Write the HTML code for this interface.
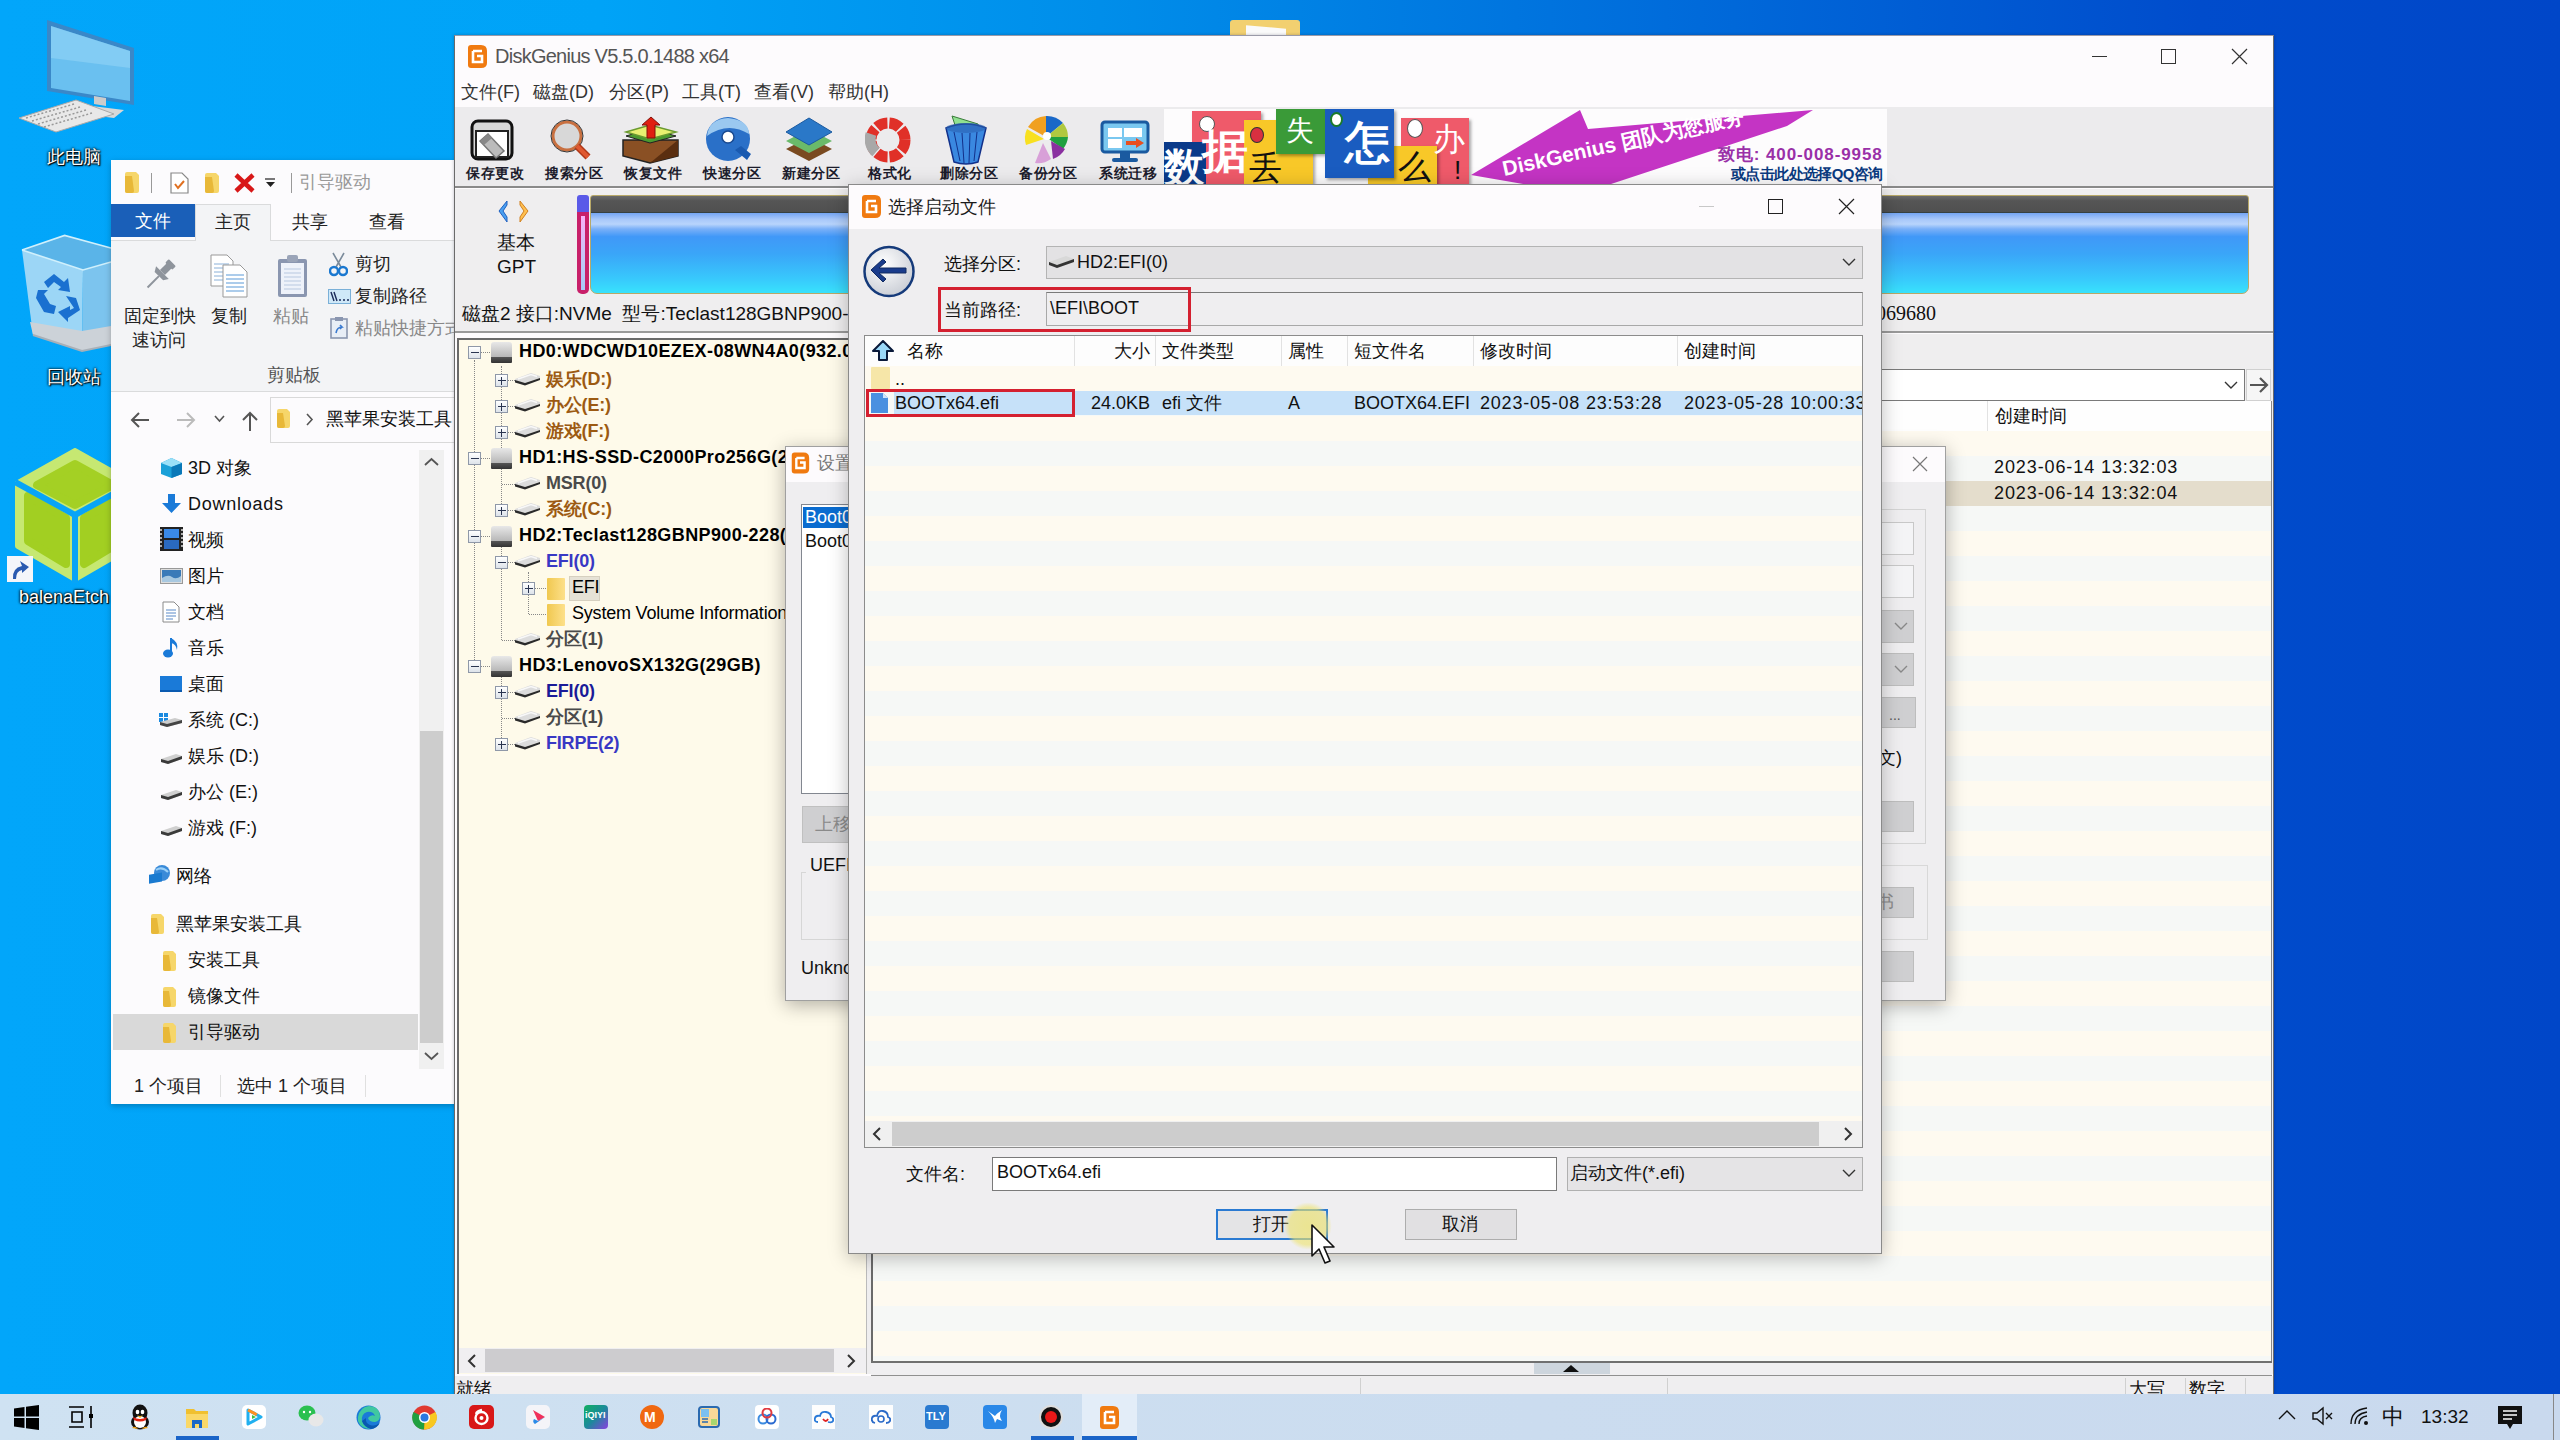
<!DOCTYPE html>
<html><head><meta charset="utf-8">
<style>
*{box-sizing:border-box;margin:0;padding:0}
html,body{width:2560px;height:1440px;overflow:hidden}
body{position:relative;font-family:"Liberation Sans",sans-serif;color:#000;
background:linear-gradient(90deg,#02a6fa 0px,#00a3f7 600px,#008eea 1100px,#006ada 1700px,#004ccc 2200px,#0046c8 2560px);}
.a{position:absolute}
.t{position:absolute;white-space:nowrap;line-height:1}
/* windows */
#exp{left:111px;top:160px;width:350px;height:944px;background:#fff;box-shadow:0 0 12px rgba(0,0,0,.35)}
#dg{left:454px;top:35px;width:1820px;height:1405px;background:#fff;box-shadow:0 0 14px rgba(0,0,0,.35)}
#set{left:785px;top:446px;width:1160px;height:554px;background:#efeef0;border:1px solid #aaa;box-shadow:0 0 16px rgba(0,0,0,.3)}
#dlg{left:848px;top:184px;width:1033px;height:1069px;background:#efeef0;border:1px solid #9a9a9a;box-shadow:0 4px 18px rgba(0,0,0,.35)}
.tbl{top:166px;font-size:14px;font-weight:bold;color:#1c1c2c;letter-spacing:0.5px}
.trt{font-size:18px;letter-spacing:-0.2px}
.xb{width:13px;height:13px;border:1px solid #8f98a8;background:linear-gradient(180deg,#fff,#dde3ea)}
.hdi{width:21px;height:21px;border-radius:3px 3px 1px 1px;background:linear-gradient(180deg,#e8e8e8,#b8b8b8 70%,#555 72%,#333 100%)}
.dri{width:26px;height:13px;background:linear-gradient(165deg,transparent 0 30%,#d8d8d8 31%,#f0f0f0 55%,#c8c8c8 65%,#333 66%,#222 100%);clip-path:polygon(0 60%,75% 0,100% 25%,100% 50%,25% 100%,0 90%)}
.fol{width:18px;height:22px;background:linear-gradient(90deg,#f0c850,#fde08a);border-radius:1px}
.lh{top:342px;font-size:18px;color:#111}
.lr{top:394px;font-size:18px;color:#111}
.dl{font-size:18px;color:#fff;text-shadow:1px 1px 1px #000,0 0 3px #000,0 0 2px #000}
#tb{left:0;top:1394px;width:2560px;height:46px;background:#cfe0f0}
</style></head><body>

<!-- desktop icons -->
<div class="a" style="left:1230px;top:20px;width:70px;height:20px;background:#f2d070;border-radius:3px 3px 0 0"></div>
<div class="a" style="left:1246px;top:27px;width:40px;height:12px;background:#fafafa;transform:skewY(5deg)"></div>
<svg class="a" style="left:14px;top:18px" width="124" height="116" viewBox="0 0 124 116"><path d="M33 2 L120 30 L120 87 L33 73Z" fill="#3a88c8"/><path d="M37 8 L116 33 L116 83 L37 70Z" fill="#6ac0f0"/><path d="M37 8 L116 33 L116 50 L37 40Z" fill="#9ad8f8" opacity=".5"/><path d="M80 78 L92 80 L92 88 L80 86Z" fill="#ccc"/><path d="M70 87 L110 92 L100 100 L60 95Z" fill="#d8d8d8"/><path d="M5 100 L62 82 L100 96 L42 114Z" fill="#e8e8e8" stroke="#aaa" stroke-width="1"/><path d="M12 100 L60 86 M18 103 L66 89 M24 106 L72 92 M30 109 L78 95" stroke="#999" stroke-width="1.5" stroke-dasharray="2 2"/></svg>
<div class="t dl" style="left:47px;top:148px">此电脑</div>
<svg class="a" style="left:18px;top:232px" width="93" height="122" viewBox="0 0 93 122"><path d="M4 18 L46.6 3.4 L93 16 L93 30 L65 38Z" fill="#5ab4e8"/><path d="M4 18 L65 38 L64 119 L15 103Z" fill="#9cd6f6"/><path d="M65 38 L93 30 L93 113 L64 119Z" fill="#7cc4ee"/><path d="M12 90 L64 99 L93 94 L93 113 L64 119 L15 103Z" fill="#ccd2d8"/><path d="M15 103 L64 119 L93 113" stroke="#a8b0b8" stroke-width="2" fill="none"/><path d="M4 18 L46.6 3.4 L93 16 M4 18 L65 38 L93 30" stroke="#d0f0fc" stroke-width="1.6" fill="none"/><path d="M26 50 L36 42 L46 50 L50 46 L52 60 L40 58 L43 55 L36 50 L30 56Z M48 64 L58 66 L62 78 L50 86 L50 90 L40 80 L52 74 L52 78 L56 76Z M20 58 L30 58 L26 62 L32 72 L38 74 L36 82 L26 80 L18 66Z" fill="#1a70d0"/></svg>
<div class="t dl" style="left:47px;top:368px">回收站</div>
<svg class="a" style="left:15px;top:448px" width="120" height="135" viewBox="0 0 120 135"><path d="M60 3 L117 35 L117 98 L60 131 L3 98 L3 35Z" fill="#c6e872" stroke="#c6e872" stroke-width="6" stroke-linejoin="round"/><path d="M60 16 L98 37 L60 57 L22 37Z" fill="#a4d024" stroke="#a4d024" stroke-width="8" stroke-linejoin="round"/><path d="M13 48 L51 70 L51 116 L13 93Z" fill="#a2cf22" stroke="#a2cf22" stroke-width="8" stroke-linejoin="round"/><path d="M69 70 L107 48 L107 93 L69 116Z" fill="#a2cf22" stroke="#a2cf22" stroke-width="8" stroke-linejoin="round"/><path d="M0 34 L60 67 L120 34 M60 67 V135" stroke="#08a4f6" stroke-width="6" fill="none"/></svg>
<div class="a" style="left:7px;top:556px;width:26px;height:26px;background:#f4f6fa"></div><svg class="a" style="left:9px;top:558px" width="22" height="22"><path d="M4 21 Q3 10 13 8 L11 3 L20 9 L13 15 L13 12 Q7 13 7 21Z" fill="#2a5ab0"/></svg>
<div class="t dl" style="left:19px;top:588px">balenaEtch</div>


<!-- explorer -->
<div class="a" style="left:111px;top:160px;width:360px;height:944px;background:#fcfbfd;box-shadow:0 2px 6px rgba(0,0,0,.25)"></div>
<svg class="a" style="left:124px;top:171px" width="17" height="23"><path d="M1 3 Q1 1 3 1 H12 L15 4 V20 Q15 22 13 22 H3 Q1 22 1 20Z" fill="#f6d66a"/><path d="M1 5 H8 L10 20 Q10 22 8 22 H3 Q1 22 1 20Z" fill="#e8b838"/></svg>
<div class="a" style="left:151px;top:173px;width:1px;height:20px;background:#999"></div>
<svg class="a" style="left:170px;top:172px" width="19" height="22"><path d="M1 1 H12 L18 7 V21 H1Z" fill="#fff" stroke="#888" stroke-width="1.2"/><path d="M5 12 L8 16 L14 9" stroke="#e07020" stroke-width="2" fill="none"/></svg>
<svg class="a" style="left:204px;top:172px" width="16" height="22"><path d="M1 3 Q1 1 3 1 H12 L15 4 V19 Q15 21 13 21 H3 Q1 21 1 19Z" fill="#f6d66a"/><path d="M1 5 H8 L10 19 Q10 21 8 21 H3 Q1 21 1 19Z" fill="#e8b838"/></svg>
<svg class="a" style="left:234px;top:173px" width="21" height="20"><path d="M2 2 L19 18 M19 2 L2 18" stroke="#d81818" stroke-width="4.5"/></svg>
<svg class="a" style="left:265px;top:178px" width="11" height="11"><path d="M0 1 H10" stroke="#222" stroke-width="1.2"/><path d="M1 4 H10 L5.5 9Z" fill="#222"/></svg>
<div class="a" style="left:291px;top:173px;width:1px;height:20px;background:#999"></div>
<div class="t" style="left:299px;top:173px;font-size:18px;color:#999">引导驱动</div>
<div class="a" style="left:111px;top:204px;width:84px;height:33px;background:#1a5fb8"></div>
<div class="t" style="left:135px;top:212px;font-size:18px;color:#fff">文件</div>
<div class="a" style="left:111px;top:240px;width:350px;height:1px;background:#dadbdc"></div>
<div class="a" style="left:195px;top:204px;width:76px;height:37px;background:#f3f4f6;border:1px solid #dadbdc;border-bottom:none"></div>
<div class="t" style="left:215px;top:213px;font-size:18px;color:#222">主页</div>
<div class="t" style="left:292px;top:213px;font-size:18px;color:#222">共享</div>
<div class="t" style="left:369px;top:213px;font-size:18px;color:#222">查看</div>
<div class="a" style="left:111px;top:241px;width:350px;height:151px;background:#f3f4f6;border-bottom:1px solid #dadbdc"></div>
<svg class="a" style="left:142px;top:259px" width="34" height="35" viewBox="0 0 34 35"><g transform="translate(19 15) rotate(45)"><rect x="-5" y="-16" width="10" height="5" rx="1" fill="#8e949c"/><rect x="-3.5" y="-12" width="7" height="10" fill="#8e949c"/><path d="M-9 -2 H9 L6 3 H-6Z" fill="#8e949c"/><rect x="-1" y="3" width="2" height="16" fill="#8e949c"/></g></svg>
<div class="t" style="left:124px;top:307px;font-size:18px;color:#222">固定到快</div>
<div class="t" style="left:132px;top:331px;font-size:18px;color:#222">速访问</div>
<svg class="a" style="left:210px;top:254px" width="40" height="44"><path d="M1 1 H17 L23 7 V32 H1Z" fill="#fff" stroke="#999" stroke-width="1"/><path d="M4 10 H19 M4 14 H19 M4 18 H19 M4 22 H19 M4 26 H19" stroke="#8ab0d8" stroke-width="1"/><path d="M13 11 H30 L37 18 V43 H13Z" fill="#fff" stroke="#999" stroke-width="1"/><path d="M16 21 H34 M16 25 H34 M16 29 H34 M16 33 H34 M16 37 H34" stroke="#5a9ad8" stroke-width="1.2"/></svg>
<div class="t" style="left:211px;top:307px;font-size:18px;color:#222">复制</div>
<svg class="a" style="left:276px;top:254px" width="33" height="44"><rect x="2" y="5" width="29" height="38" rx="2" fill="#8a96b0"/><rect x="5" y="9" width="23" height="31" fill="#eef2fa"/><path d="M8 15 H25 M8 19 H25 M8 23 H25 M8 27 H25 M8 31 H25 M8 35 H25" stroke="#b8c8e0" stroke-width="1"/><rect x="11" y="1" width="11" height="7" rx="2" fill="#9aa4b8"/></svg>
<div class="t" style="left:273px;top:307px;font-size:18px;color:#888">粘贴</div>
<svg class="a" style="left:329px;top:252px" width="19" height="25"><path d="M4 1 L12 15 M15 1 L7 15" stroke="#7a8a9a" stroke-width="1.6"/><circle cx="5" cy="19" r="4" fill="none" stroke="#1a78d0" stroke-width="2.4"/><circle cx="14" cy="19" r="4" fill="none" stroke="#1a78d0" stroke-width="2.4"/></svg>
<div class="t" style="left:355px;top:255px;font-size:18px;color:#222">剪切</div>
<svg class="a" style="left:328px;top:289px" width="23" height="15"><rect x="0.5" y="0.5" width="22" height="14" fill="#cfe8f8" stroke="#7ab0d8"/><path d="M3 3 L6 12 M6 3 L9 12" stroke="#1a2a5a" stroke-width="1.4"/><path d="M11 11 H13 M15 11 H17 M19 11 H21" stroke="#1a2a5a" stroke-width="1.5"/></svg>
<div class="t" style="left:355px;top:287px;font-size:18px;color:#222">复制路径</div>
<svg class="a" style="left:330px;top:316px" width="18" height="23"><rect x="1" y="3" width="16" height="19" fill="#e8eef6" stroke="#8a96b0" stroke-width="1.6"/><rect x="5" y="1" width="8" height="4" fill="#8a96b0"/><path d="M6 17 Q7 11 12 11 L10 9 M12 11 L10 13" stroke="#3a7ad0" stroke-width="1.6" fill="none"/></svg>
<div class="t" style="left:355px;top:319px;font-size:18px;color:#888">粘贴快捷方式</div>
<div class="t" style="left:267px;top:366px;font-size:18px;color:#555">剪贴板</div>
<svg class="a" style="left:129px;top:410px" width="22" height="20"><path d="M20 10 H3 M10 3 L3 10 L10 17" stroke="#555" stroke-width="2" fill="none"/></svg>
<svg class="a" style="left:175px;top:410px" width="22" height="20"><path d="M2 10 H19 M12 3 L19 10 L12 17" stroke="#bbb" stroke-width="2" fill="none"/></svg>
<svg class="a" style="left:214px;top:415px" width="11" height="8"><path d="M1 1 L5.5 6 L10 1" stroke="#555" stroke-width="1.6" fill="none"/></svg>
<svg class="a" style="left:240px;top:410px" width="20" height="22"><path d="M10 21 V3 M3 10 L10 3 L17 10" stroke="#555" stroke-width="2" fill="none"/></svg>
<div class="a" style="left:270px;top:397px;width:200px;height:46px;background:#fcfbfd;border:1px solid #d9d9d9"></div>
<svg class="a" style="left:276px;top:408px" width="15" height="21"><path d="M1 3 Q1 1 3 1 H11 L14 4 V18 Q14 20 12 20 H3 Q1 20 1 18Z" fill="#f6d66a"/><path d="M1 5 H7 L9 18 Q9 20 7 20 H3 Q1 20 1 18Z" fill="#e8b838"/></svg>
<svg class="a" style="left:305px;top:413px" width="9" height="13"><path d="M2 1 L7 6.5 L2 12" stroke="#555" stroke-width="1.6" fill="none"/></svg>
<div class="t" style="left:326px;top:410px;font-size:18px;color:#111">黑苹果安装工具</div>
<!-- nav pane -->
<svg class="a" style="left:160px;top:457px" width="23" height="22"><path d="M11.5 1 L22 6 V17 L11.5 21 L1 17 V6Z" fill="#1aa0d8"/><path d="M1 6 L11.5 10 L22 6 L11.5 1Z" fill="#9ae0f8"/><path d="M11.5 10 V21 L22 17 V6Z" fill="#0a78b8"/></svg>
<div class="t" style="left:188px;top:459px;font-size:18px;color:#111">3D 对象</div>
<svg class="a" style="left:161px;top:493px" width="21" height="21"><path d="M7 1 H14 V10 H20 L10.5 20 L1 10 H7Z" fill="#1a7ad8"/></svg>
<div class="t" style="left:188px;top:495px;font-size:18px;color:#111;letter-spacing:0.75px">Downloads</div>
<svg class="a" style="left:160px;top:527px" width="23" height="24"><rect x="0" y="0" width="23" height="24" fill="#222"/><rect x="4" y="2" width="15" height="9" fill="#3a8ae8"/><rect x="4" y="13" width="15" height="9" fill="#2a6ac0"/><path d="M1 2 V22 M22 2 V22" stroke="#ddd" stroke-width="1.5" stroke-dasharray="2 2"/></svg>
<div class="t" style="left:188px;top:531px;font-size:18px;color:#111">视频</div>
<svg class="a" style="left:160px;top:568px" width="23" height="16"><rect x="0.5" y="0.5" width="22" height="15" fill="#ddd" stroke="#999"/><rect x="2" y="2" width="19" height="12" fill="#3a7ab8"/><path d="M2 10 Q8 6 12 9 T21 8 V14 H2Z" fill="#a8c8e0"/></svg>
<div class="t" style="left:188px;top:567px;font-size:18px;color:#111">图片</div>
<svg class="a" style="left:162px;top:601px" width="18" height="22"><path d="M1 1 H12 L17 6 V21 H1Z" fill="#fff" stroke="#8a8a8a"/><path d="M4 9 H14 M4 12 H14 M4 15 H14 M4 18 H11" stroke="#5a8ac8" stroke-width="1"/></svg>
<div class="t" style="left:188px;top:603px;font-size:18px;color:#111">文档</div>
<svg class="a" style="left:163px;top:636px" width="17" height="23"><path d="M8 2 V17" stroke="#1a7ad8" stroke-width="2"/><ellipse cx="5" cy="17.5" rx="5" ry="4" fill="#1a7ad8"/><path d="M8 2 Q16 6 14 14 Q13 8 8 7Z" fill="#1a7ad8"/></svg>
<div class="t" style="left:188px;top:639px;font-size:18px;color:#111">音乐</div>
<div class="a" style="left:160px;top:676px;width:22px;height:16px;background:#1a7ad8;border-bottom:2px solid #0a5ab0"></div>
<div class="t" style="left:188px;top:675px;font-size:18px;color:#111">桌面</div>
<svg class="a" style="left:158px;top:711px" width="25" height="17"><path d="M1 2 H5 V6 H1Z M6 2 H10 V6 H6Z M1 7 H5 V11 H1Z M6 7 H10 V11 H6Z" fill="#1a8ae0"/><path d="M2 11 L17 7 L24 9 V12 L9 16 L2 14Z" fill="#ccc"/><path d="M2 11 L9 13 L24 9 V12 L9 16 L2 14Z" fill="#444"/></svg>
<div class="t" style="left:188px;top:711px;font-size:18px;color:#111">系统 (C:)</div>
<svg class="a dr2" style="left:160px;top:750px" width="23" height="17"><path d="M1 9 L16 4 L22 6 V9 L8 14 L1 12Z" fill="#d0d0d0"/><path d="M1 9 L8 11 L22 6 V9 L8 14 L1 12Z" fill="#3a3a3a"/></svg>
<div class="t" style="left:188px;top:747px;font-size:18px;color:#111">娱乐 (D:)</div>
<svg class="a" style="left:160px;top:786px" width="23" height="17"><path d="M1 9 L16 4 L22 6 V9 L8 14 L1 12Z" fill="#d0d0d0"/><path d="M1 9 L8 11 L22 6 V9 L8 14 L1 12Z" fill="#3a3a3a"/></svg>
<div class="t" style="left:188px;top:783px;font-size:18px;color:#111">办公 (E:)</div>
<svg class="a" style="left:160px;top:822px" width="23" height="17"><path d="M1 9 L16 4 L22 6 V9 L8 14 L1 12Z" fill="#d0d0d0"/><path d="M1 9 L8 11 L22 6 V9 L8 14 L1 12Z" fill="#3a3a3a"/></svg>
<div class="t" style="left:188px;top:819px;font-size:18px;color:#111">游戏 (F:)</div>
<svg class="a" style="left:148px;top:864px" width="23" height="23"><circle cx="14" cy="9" r="8" fill="#3a8ad8"/><path d="M8 6 Q14 2 20 8" stroke="#9ad0f8" stroke-width="2" fill="none"/><rect x="1" y="11" width="13" height="9" fill="#1a7ad0" transform="skewY(-10)"/></svg>
<div class="t" style="left:176px;top:867px;font-size:18px;color:#111">网络</div>
<svg class="a" style="left:150px;top:913px" width="16" height="22"><path d="M1 3 Q1 1 3 1 H11 L14 4 V19 Q14 21 12 21 H3 Q1 21 1 19Z" fill="#f6d66a"/><path d="M1 5 H7 L9 19 Q9 21 7 21 H3 Q1 21 1 19Z" fill="#e8b838"/></svg>
<div class="t" style="left:176px;top:915px;font-size:18px;color:#111">黑苹果安装工具</div>
<svg class="a" style="left:162px;top:950px" width="16" height="22"><path d="M1 3 Q1 1 3 1 H11 L14 4 V19 Q14 21 12 21 H3 Q1 21 1 19Z" fill="#f6d66a"/><path d="M1 5 H7 L9 19 Q9 21 7 21 H3 Q1 21 1 19Z" fill="#e8b838"/></svg>
<div class="t" style="left:188px;top:951px;font-size:18px;color:#111">安装工具</div>
<svg class="a" style="left:162px;top:986px" width="16" height="22"><path d="M1 3 Q1 1 3 1 H11 L14 4 V19 Q14 21 12 21 H3 Q1 21 1 19Z" fill="#f6d66a"/><path d="M1 5 H7 L9 19 Q9 21 7 21 H3 Q1 21 1 19Z" fill="#e8b838"/></svg>
<div class="t" style="left:188px;top:987px;font-size:18px;color:#111">镜像文件</div>
<div class="a" style="left:113px;top:1014px;width:305px;height:36px;background:#d9d9d9"></div>
<svg class="a" style="left:162px;top:1022px" width="16" height="22"><path d="M1 3 Q1 1 3 1 H11 L14 4 V19 Q14 21 12 21 H3 Q1 21 1 19Z" fill="#f6d66a"/><path d="M1 5 H7 L9 19 Q9 21 7 21 H3 Q1 21 1 19Z" fill="#e8b838"/></svg>
<div class="t" style="left:188px;top:1023px;font-size:18px;color:#111">引导驱动</div>
<div class="a" style="left:419px;top:450px;width:25px;height:619px;background:#f0f0f0"></div>
<div class="a" style="left:420px;top:731px;width:23px;height:312px;background:#cdcdcd"></div>
<svg class="a" style="left:424px;top:457px" width="15" height="10"><path d="M1 8 L7.5 2 L14 8" stroke="#555" stroke-width="1.8" fill="none"/></svg>
<svg class="a" style="left:424px;top:1051px" width="15" height="10"><path d="M1 2 L7.5 8 L14 2" stroke="#555" stroke-width="1.8" fill="none"/></svg>
<div class="t" style="left:134px;top:1077px;font-size:18px;color:#222">1 个项目</div>
<div class="a" style="left:220px;top:1075px;width:1px;height:22px;background:#e0e0e0"></div>
<div class="t" style="left:237px;top:1077px;font-size:18px;color:#222">选中 1 个项目</div>
<div class="a" style="left:365px;top:1075px;width:1px;height:22px;background:#e0e0e0"></div>




<!-- diskgenius -->
<div class="a" style="left:454px;top:35px;width:1820px;height:1405px;background:#fdfbfd;border:1px solid #6a6a6a;border-top-color:#9a9aa8;box-shadow:0 0 3px rgba(0,0,40,.25)"></div>
<!-- title -->
<svg class="a" style="left:465px;top:44px" width="24" height="25" viewBox="0 0 24 25"><path d="M3 4 Q3 1 6 1 L16 1 Q22 1 22 7 L22 19 Q22 24 16 24 L6 24 Q3 24 3 21Z" fill="#f07a10"/><path d="M8 7 H17 M8 7 V18 H17 V12 H12" stroke="#fff" stroke-width="2.6" fill="none"/></svg>
<div class="t" style="left:495px;top:46px;font-size:20px;color:#555;letter-spacing:-0.75px">DiskGenius V5.5.0.1488 x64</div>
<div class="a" style="left:2092px;top:56px;width:15px;height:1px;background:#333"></div>
<div class="a" style="left:2161px;top:49px;width:15px;height:15px;border:1px solid #333"></div>
<svg class="a" style="left:2231px;top:48px" width="17" height="17"><path d="M1 1L16 16M16 1L1 16" stroke="#333" stroke-width="1.2"/></svg>
<!-- menu -->
<div class="t" style="left:461px;top:83px;font-size:18px;color:#333;word-spacing:0">文件(F)</div>
<div class="t" style="left:533px;top:83px;font-size:18px;color:#333">磁盘(D)</div>
<div class="t" style="left:609px;top:83px;font-size:18px;color:#333">分区(P)</div>
<div class="t" style="left:682px;top:83px;font-size:18px;color:#333">工具(T)</div>
<div class="t" style="left:754px;top:83px;font-size:18px;color:#333">查看(V)</div>
<div class="t" style="left:828px;top:83px;font-size:18px;color:#333">帮助(H)</div>
<!-- toolbar -->
<div class="a" style="left:455px;top:107px;width:1818px;height:81px;background:#ecebed;border-bottom:2px solid #8a8a8a"></div>
<div class="tbl t" style="left:466px">保存更改</div>
<div class="tbl t" style="left:545px">搜索分区</div>
<div class="tbl t" style="left:624px">恢复文件</div>
<div class="tbl t" style="left:703px">快速分区</div>
<div class="tbl t" style="left:782px">新建分区</div>
<div class="tbl t" style="left:868px">格式化</div>
<div class="tbl t" style="left:940px">删除分区</div>
<div class="tbl t" style="left:1019px">备份分区</div>
<div class="tbl t" style="left:1099px">系统迁移</div>

<!-- toolbar icons -->
<svg class="a" style="left:470px;top:119px" width="44" height="42" viewBox="0 0 44 42"><rect x="2" y="2" width="40" height="38" rx="6" fill="#d8d8d8" stroke="#111" stroke-width="3"/><rect x="6" y="12" width="32" height="26" fill="#fff" stroke="#222" stroke-width="2"/><path d="M10 22 L18 15 L34 32 L26 39 Z" fill="#bbb" stroke="#777" stroke-width="1.5"/><path d="M10 22 L18 15 L22 19 L14 26Z" fill="#888"/></svg>
<svg class="a" style="left:550px;top:119px" width="42" height="42" viewBox="0 0 42 42"><circle cx="17" cy="17" r="14" fill="#d8d8d8" stroke="#c87040" stroke-width="3"/><circle cx="17" cy="17" r="16" fill="none" stroke="#333" stroke-width="1"/><path d="M27 27 L38 38" stroke="#b03818" stroke-width="7"/><path d="M27 27 L38 38" stroke="#e05830" stroke-width="4"/></svg>
<svg class="a" style="left:620px;top:116px" width="62" height="48" viewBox="0 0 62 48"><path d="M3 24 L58 24 L58 40 L30 47 L3 40Z" fill="#8a5024" stroke="#222" stroke-width="1.5"/><path d="M58 24 L58 40 L30 47 Z" fill="#5a2e10"/><path d="M6 20 L30 13 L56 20 L30 27Z" fill="#4a9a30" stroke="#222" stroke-width="1"/><path d="M6 16 L30 9 L56 16 L30 23Z" fill="#e8f070" stroke="#6a9a30" stroke-width="1.5"/><path d="M27 22 V9 H22 L31 1 L40 9 H35 V22Z" fill="#e02010" stroke="#801008" stroke-width="1"/></svg>
<svg class="a" style="left:705px;top:116px" width="50" height="48" viewBox="0 0 50 48"><circle cx="23" cy="23" r="22" fill="#2a70c8"/><path d="M2 20 Q23 5 44 18 Q44 4 23 2 Q4 3 2 20Z" fill="#9ac8f0"/><circle cx="23" cy="21" r="6" fill="#fff" stroke="#1a4a90" stroke-width="1.5"/><path d="M30 34 L42 44 L46 38 L36 30Z" fill="#1a5ab0"/></svg>
<svg class="a" style="left:784px;top:115px" width="50" height="48" viewBox="0 0 50 48"><path d="M2 34 L25 22 L48 34 L25 46Z" fill="#7a4a20"/><path d="M2 26 L25 14 L48 26 L25 38Z" fill="#6aba6a"/><path d="M2 17 L25 3 L48 17 L25 30Z" fill="#2a78c8" stroke="#1a5aa0" stroke-width="1"/></svg>
<svg class="a" style="left:865px;top:117px" width="48" height="48" viewBox="0 0 48 48"><circle cx="23" cy="23" r="17" fill="none" stroke="#e03028" stroke-width="11" stroke-dasharray="11.5 2"/><path d="M6 17 A17 17 0 0 0 11 35" fill="none" stroke="#a8a8a8" stroke-width="11"/></svg>
<svg class="a" style="left:944px;top:114px" width="46" height="52" viewBox="0 0 46 52"><path d="M12 14 L8 2 L34 10 L36 22 Z" fill="#90e090" stroke="#3a7a3a" stroke-width="1"/><path d="M2 14 Q22 6 42 14 L34 48 Q22 52 10 48Z" fill="#3a88e0" stroke="#12308a" stroke-width="1.5"/><path d="M10 18 L16 47 M18 19 L20 49 M26 19 L25 49 M33 18 L30 47" stroke="#12308a" stroke-width="1"/><ellipse cx="22" cy="14" rx="20" ry="5" fill="#2a60b0" opacity=".6"/></svg>
<svg class="a" style="left:1023px;top:115px" width="48" height="50" viewBox="0 0 48 50"><path d="M23 22 L5 12 A22 22 0 0 1 23 1Z" fill="#f0a020"/><path d="M23 22 L23 1 A22 22 0 0 1 40 8Z" fill="#1a68c8"/><path d="M23 22 L40 8 A22 22 0 0 1 45 22Z" fill="#b0c840"/><path d="M23 22 L45 22 A22 22 0 0 1 40 34Z" fill="#20a040"/><path d="M28 26 L42 34 A22 22 0 0 1 30 44Z" fill="#8a30a0"/><path d="M20 28 L28 44 A22 22 0 0 1 12 48Z" fill="#d8a0d8"/><path d="M21 24 L3 30 A22 22 0 0 1 4 14Z" fill="#f8e020"/><circle cx="24" cy="21" r="4" fill="#fff"/></svg>
<svg class="a" style="left:1100px;top:120px" width="50" height="44" viewBox="0 0 50 44"><rect x="2" y="2" width="46" height="30" rx="3" fill="#7ac8f0" stroke="#1a5aa0" stroke-width="3"/><path d="M8 8 H22 V17 H8Z M24 8 H42 V17 H24Z M8 19 H22 V28 H8Z" fill="#fff"/><path d="M26 21 H36 V18 L44 23 L36 28 V25 H26Z" fill="#e85020"/><rect x="20" y="32" width="10" height="6" fill="#1a5aa0"/><rect x="12" y="38" width="26" height="4" rx="2" fill="#1a5aa0"/></svg>
<!-- banner -->
<div class="a" style="left:1164px;top:109px;width:723px;height:77px;background:#fdfcfd;overflow:hidden">
 <div class="a" style="left:28px;top:2px;width:69px;height:75px;background:#ef5a6a;box-shadow:2px 2px 3px rgba(0,0,0,.35)"></div>
 <div class="a" style="left:80px;top:11px;width:69px;height:66px;background:#f8c828;box-shadow:2px 2px 3px rgba(0,0,0,.35)"></div>
 <div class="a" style="left:112px;top:0;width:49px;height:45px;background:#3a9a38;box-shadow:2px 2px 3px rgba(0,0,0,.35)"></div>
 <div class="a" style="left:237px;top:9px;width:68px;height:68px;background:#ef5a6a;box-shadow:2px 2px 3px rgba(0,0,0,.35)"></div>
 <div class="a" style="left:204px;top:37px;width:69px;height:40px;background:#f8c828;box-shadow:2px 2px 3px rgba(0,0,0,.35)"></div>
 <div class="a" style="left:161px;top:0;width:69px;height:69px;background:#1a5cc0;box-shadow:2px 2px 3px rgba(0,0,0,.35)"></div>
 <div class="a" style="left:0;top:33px;width:42px;height:44px;background:#0a3a8a"></div>
 <div class="a" style="left:35px;top:7px;width:16px;height:16px;border-radius:50%;background:#fff;border:1px solid #555"></div>
 <div class="a" style="left:86px;top:18px;width:14px;height:16px;border-radius:50%;background:#d83040;border:1px solid #333"></div>
 <div class="a" style="left:166px;top:3px;width:13px;height:15px;border-radius:50%;background:#fff;border:2px solid #1a7a2a"></div>
 <div class="a" style="left:243px;top:10px;width:16px;height:19px;border-radius:50%;background:#fff;border:1px solid #555"></div>
 <div class="t" style="left:0px;top:38px;font-size:40px;font-weight:bold;color:#fff">数</div>
 <div class="t" style="left:38px;top:19px;font-size:46px;font-weight:bold;color:#fff">据</div>
 <div class="t" style="left:85px;top:42px;font-size:33px;color:#111">丢</div>
 <div class="t" style="left:122px;top:8px;font-size:28px;color:#fff">失</div>
 <div class="t" style="left:181px;top:11px;font-size:45px;font-weight:bold;color:#fff">怎</div>
 <div class="t" style="left:234px;top:41px;font-size:33px;color:#111">么</div>
 <div class="t" style="left:269px;top:14px;font-size:32px;color:#fff">办</div>
 <div class="t" style="left:290px;top:48px;font-size:26px;color:#111">!</div>
 <svg class="a" style="left:0;top:0" width="723" height="77"><path d="M307 66 L416 1 L424 20 L649 1 L623 17 L441 77 L370 77Z" fill="#c434c4"/></svg>
 <div class="t" style="left:341px;top:49px;font-size:21px;font-weight:bold;color:#fff;transform:rotate(-12.6deg);transform-origin:0 100%">DiskGenius 团队为您服务</div>
 <div class="t" style="left:554px;top:37px;font-size:17px;font-weight:bold;color:#9a30a8;letter-spacing:0.9px">致电: 400-008-9958</div>
 <div class="t" style="left:567px;top:57px;font-size:15px;font-weight:bold;color:#0a3a80;letter-spacing:-0.6px">或点击此处选择QQ咨询</div>
</div>
<!-- disk area -->
<div class="a" style="left:455px;top:189px;width:1818px;height:144px;background:#efeeef;border-bottom:2px solid #9a9a9a"></div>
<svg class="a" style="left:494px;top:199px" width="40" height="25"><path d="M13 2 L5 12 L13 23 L13 18 L9 12 L13 6Z" fill="#4aa0f0" stroke="#2060c0" stroke-width="1"/><path d="M26 2 L34 12 L26 23 L26 18 L30 12 L26 6Z" fill="#ffc050" stroke="#d08020" stroke-width="1"/></svg>
<div class="t" style="left:497px;top:233px;font-size:19px;color:#111">基本</div>
<div class="t" style="left:497px;top:257px;font-size:19px;color:#111">GPT</div>
<div class="a" style="left:577px;top:195px;width:12px;height:99px;border-radius:3px 3px 5px 5px;background:linear-gradient(180deg,#5a5ae8 0,#5a5ae8 17%,#c8206a 17.5%,#c8206a 100%)"></div><div class="a" style="left:581px;top:216px;width:4px;height:74px;background:linear-gradient(180deg,#f8b0f8,#c0c8f8 60%,#a8c8f8)"></div>
<div class="a" style="left:590px;top:195px;width:1659px;height:99px;border:1px solid #b8a868;border-radius:3px 3px 7px 7px;overflow:hidden;background:linear-gradient(180deg,#6a6a6a 0,#555 5%,#505050 16%,#2a3a3a 17.5%,#78a8f4 18%,#a8c8fa 24%,#b8d4fc 29%,#7ab0f8 34%,#4098f8 42%,#3aa6f8 60%,#38c8fc 85%,#38e2fc 100%)"></div>
<div class="t" style="left:462px;top:304px;font-size:19px;color:#111">磁盘2 接口:NVMe&nbsp; 型号:Teclast128GBNP900-228</div>
<div class="t" style="left:1876px;top:303px;font-size:20px;color:#111;font-family:'Liberation Serif',serif">069680</div>
<!-- tree pane -->
<div class="a" style="left:457px;top:338px;width:410px;height:1036px;background:#fefaea;border-left:2px solid #6a6a6a;border-top:2px solid #6a6a6a;border-right:1px solid #bbb"></div>
<!-- tree -->
<div class="a" style="left:459px;top:340px;width:407px;height:1008px;overflow:hidden">
<div class="a" style="left:15px;top:20px;width:1px;height:306px;border-left:1px dotted #888"></div>
<div class="a" style="left:42px;top:26px;width:1px;height:66px;border-left:1px dotted #888"></div>
<div class="a" style="left:42px;top:26px;width:1px;height:144px;border-left:1px dotted #888"></div>
<div class="a" style="left:42px;top:206px;width:1px;height:94px;border-left:1px dotted #888"></div>
<div class="a" style="left:42px;top:336px;width:1px;height:68px;border-left:1px dotted #888"></div>
<div class="a" style="left:69px;top:232px;width:1px;height:42px;border-left:1px dotted #888"></div>
<div class="a" style="left:21px;top:12px;width:10px;height:1px;border-top:1px dotted #888"></div>
<div class="a xb" style="left:9px;top:6px"><div class="a" style="left:2px;top:5px;width:8px;height:1px;background:#2a3550"></div></div>
<div class="a hdi" style="left:32px;top:2px"></div>
<div class="t trt" style="left:60px;top:2px;color:#000;font-weight:bold;letter-spacing:0.4px">HD0:WDCWD10EZEX-08WN4A0(932.0GB)</div>
<div class="a" style="left:48px;top:40px;width:8px;height:1px;border-top:1px dotted #888"></div>
<div class="a xb" style="left:36px;top:34px"><div class="a" style="left:2px;top:5px;width:8px;height:1px;background:#2a3550"></div><div class="a" style="left:5px;top:2px;width:1px;height:8px;background:#2a3550"></div></div>
<svg class="a" style="left:56px;top:33px" width="26" height="13"><path d="M0 6 L16 0 L25 3 L25 5 L10 10 L0 8Z" fill="#dcdcdc"/><path d="M3 6 L16 1.5 L22 3.5" stroke="#f8f8f8" stroke-width="1.5" fill="none"/><path d="M0 7 L10 10 L25 5 L25 7 L10 12.5 L0 9.5Z" fill="#2a2a2a"/></svg>
<div class="t trt" style="left:87px;top:30px;color:#9c5a12;font-weight:bold">娱乐(D:)</div>
<div class="a" style="left:48px;top:66px;width:8px;height:1px;border-top:1px dotted #888"></div>
<div class="a xb" style="left:36px;top:60px"><div class="a" style="left:2px;top:5px;width:8px;height:1px;background:#2a3550"></div><div class="a" style="left:5px;top:2px;width:1px;height:8px;background:#2a3550"></div></div>
<svg class="a" style="left:56px;top:59px" width="26" height="13"><path d="M0 6 L16 0 L25 3 L25 5 L10 10 L0 8Z" fill="#dcdcdc"/><path d="M3 6 L16 1.5 L22 3.5" stroke="#f8f8f8" stroke-width="1.5" fill="none"/><path d="M0 7 L10 10 L25 5 L25 7 L10 12.5 L0 9.5Z" fill="#2a2a2a"/></svg>
<div class="t trt" style="left:87px;top:56px;color:#9c5a12;font-weight:bold">办公(E:)</div>
<div class="a" style="left:48px;top:92px;width:8px;height:1px;border-top:1px dotted #888"></div>
<div class="a xb" style="left:36px;top:86px"><div class="a" style="left:2px;top:5px;width:8px;height:1px;background:#2a3550"></div><div class="a" style="left:5px;top:2px;width:1px;height:8px;background:#2a3550"></div></div>
<svg class="a" style="left:56px;top:85px" width="26" height="13"><path d="M0 6 L16 0 L25 3 L25 5 L10 10 L0 8Z" fill="#dcdcdc"/><path d="M3 6 L16 1.5 L22 3.5" stroke="#f8f8f8" stroke-width="1.5" fill="none"/><path d="M0 7 L10 10 L25 5 L25 7 L10 12.5 L0 9.5Z" fill="#2a2a2a"/></svg>
<div class="t trt" style="left:87px;top:82px;color:#9c5a12;font-weight:bold">游戏(F:)</div>
<div class="a" style="left:21px;top:118px;width:10px;height:1px;border-top:1px dotted #888"></div>
<div class="a xb" style="left:9px;top:112px"><div class="a" style="left:2px;top:5px;width:8px;height:1px;background:#2a3550"></div></div>
<div class="a hdi" style="left:32px;top:108px"></div>
<div class="t trt" style="left:60px;top:108px;color:#000;font-weight:bold;letter-spacing:0.4px">HD1:HS-SSD-C2000Pro256G(238GB)</div>
<div class="a" style="left:43px;top:144px;width:13px;height:1px;border-top:1px dotted #888"></div>
<svg class="a" style="left:56px;top:137px" width="26" height="13"><path d="M0 6 L16 0 L25 3 L25 5 L10 10 L0 8Z" fill="#dcdcdc"/><path d="M3 6 L16 1.5 L22 3.5" stroke="#f8f8f8" stroke-width="1.5" fill="none"/><path d="M0 7 L10 10 L25 5 L25 7 L10 12.5 L0 9.5Z" fill="#2a2a2a"/></svg>
<div class="t trt" style="left:87px;top:134px;color:#4a4a4a;font-weight:bold">MSR(0)</div>
<div class="a" style="left:48px;top:170px;width:8px;height:1px;border-top:1px dotted #888"></div>
<div class="a xb" style="left:36px;top:164px"><div class="a" style="left:2px;top:5px;width:8px;height:1px;background:#2a3550"></div><div class="a" style="left:5px;top:2px;width:1px;height:8px;background:#2a3550"></div></div>
<svg class="a" style="left:56px;top:163px" width="26" height="13"><path d="M0 6 L16 0 L25 3 L25 5 L10 10 L0 8Z" fill="#dcdcdc"/><path d="M3 6 L16 1.5 L22 3.5" stroke="#f8f8f8" stroke-width="1.5" fill="none"/><path d="M0 7 L10 10 L25 5 L25 7 L10 12.5 L0 9.5Z" fill="#2a2a2a"/></svg>
<div class="t trt" style="left:87px;top:160px;color:#9c5a12;font-weight:bold">系统(C:)</div>
<div class="a" style="left:21px;top:196px;width:10px;height:1px;border-top:1px dotted #888"></div>
<div class="a xb" style="left:9px;top:190px"><div class="a" style="left:2px;top:5px;width:8px;height:1px;background:#2a3550"></div></div>
<div class="a hdi" style="left:32px;top:186px"></div>
<div class="t trt" style="left:60px;top:186px;color:#000;font-weight:bold;letter-spacing:0.4px">HD2:Teclast128GBNP900-228(119GB)</div>
<div class="a" style="left:48px;top:222px;width:8px;height:1px;border-top:1px dotted #888"></div>
<div class="a xb" style="left:36px;top:216px"><div class="a" style="left:2px;top:5px;width:8px;height:1px;background:#2a3550"></div></div>
<svg class="a" style="left:56px;top:215px" width="26" height="13"><path d="M0 6 L16 0 L25 3 L25 5 L10 10 L0 8Z" fill="#dcdcdc"/><path d="M3 6 L16 1.5 L22 3.5" stroke="#f8f8f8" stroke-width="1.5" fill="none"/><path d="M0 7 L10 10 L25 5 L25 7 L10 12.5 L0 9.5Z" fill="#2a2a2a"/></svg>
<div class="t trt" style="left:87px;top:212px;color:#3838c4;font-weight:bold">EFI(0)</div>
<div class="a" style="left:75px;top:248px;width:12px;height:1px;border-top:1px dotted #888"></div>
<div class="a xb" style="left:63px;top:242px"><div class="a" style="left:2px;top:5px;width:8px;height:1px;background:#2a3550"></div><div class="a" style="left:5px;top:2px;width:1px;height:8px;background:#2a3550"></div></div>
<div class="a fol" style="left:88px;top:238px"></div>
<div class="a" style="left:110px;top:236px;width:31px;height:25px;background:#e6e2d6;border:1px solid #d6d0c0"></div>
<div class="t trt" style="left:113px;top:238px;color:#000">EFI</div>
<div class="a" style="left:70px;top:274px;width:17px;height:1px;border-top:1px dotted #888"></div>
<div class="a fol" style="left:88px;top:264px"></div>
<div class="t trt" style="left:113px;top:264px;color:#000">System Volume Information</div>
<div class="a" style="left:43px;top:300px;width:13px;height:1px;border-top:1px dotted #888"></div>
<svg class="a" style="left:56px;top:293px" width="26" height="13"><path d="M0 6 L16 0 L25 3 L25 5 L10 10 L0 8Z" fill="#dcdcdc"/><path d="M3 6 L16 1.5 L22 3.5" stroke="#f8f8f8" stroke-width="1.5" fill="none"/><path d="M0 7 L10 10 L25 5 L25 7 L10 12.5 L0 9.5Z" fill="#2a2a2a"/></svg>
<div class="t trt" style="left:87px;top:290px;color:#4a4a4a;font-weight:bold">分区(1)</div>
<div class="a" style="left:21px;top:326px;width:10px;height:1px;border-top:1px dotted #888"></div>
<div class="a xb" style="left:9px;top:320px"><div class="a" style="left:2px;top:5px;width:8px;height:1px;background:#2a3550"></div></div>
<div class="a hdi" style="left:32px;top:316px"></div>
<div class="t trt" style="left:60px;top:316px;color:#000;font-weight:bold;letter-spacing:0.4px">HD3:LenovoSX132G(29GB)</div>
<div class="a" style="left:48px;top:352px;width:8px;height:1px;border-top:1px dotted #888"></div>
<div class="a xb" style="left:36px;top:346px"><div class="a" style="left:2px;top:5px;width:8px;height:1px;background:#2a3550"></div><div class="a" style="left:5px;top:2px;width:1px;height:8px;background:#2a3550"></div></div>
<svg class="a" style="left:56px;top:345px" width="26" height="13"><path d="M0 6 L16 0 L25 3 L25 5 L10 10 L0 8Z" fill="#dcdcdc"/><path d="M3 6 L16 1.5 L22 3.5" stroke="#f8f8f8" stroke-width="1.5" fill="none"/><path d="M0 7 L10 10 L25 5 L25 7 L10 12.5 L0 9.5Z" fill="#2a2a2a"/></svg>
<div class="t trt" style="left:87px;top:342px;color:#1a1a98;font-weight:bold">EFI(0)</div>
<div class="a" style="left:43px;top:378px;width:13px;height:1px;border-top:1px dotted #888"></div>
<svg class="a" style="left:56px;top:371px" width="26" height="13"><path d="M0 6 L16 0 L25 3 L25 5 L10 10 L0 8Z" fill="#dcdcdc"/><path d="M3 6 L16 1.5 L22 3.5" stroke="#f8f8f8" stroke-width="1.5" fill="none"/><path d="M0 7 L10 10 L25 5 L25 7 L10 12.5 L0 9.5Z" fill="#2a2a2a"/></svg>
<div class="t trt" style="left:87px;top:368px;color:#4a4a4a;font-weight:bold">分区(1)</div>
<div class="a" style="left:48px;top:404px;width:8px;height:1px;border-top:1px dotted #888"></div>
<div class="a xb" style="left:36px;top:398px"><div class="a" style="left:2px;top:5px;width:8px;height:1px;background:#2a3550"></div><div class="a" style="left:5px;top:2px;width:1px;height:8px;background:#2a3550"></div></div>
<svg class="a" style="left:56px;top:397px" width="26" height="13"><path d="M0 6 L16 0 L25 3 L25 5 L10 10 L0 8Z" fill="#dcdcdc"/><path d="M3 6 L16 1.5 L22 3.5" stroke="#f8f8f8" stroke-width="1.5" fill="none"/><path d="M0 7 L10 10 L25 5 L25 7 L10 12.5 L0 9.5Z" fill="#2a2a2a"/></svg>
<div class="t trt" style="left:87px;top:394px;color:#3838c4;font-weight:bold">FIRPE(2)</div>
</div>
<div class="a" style="left:459px;top:1348px;width:407px;height:25px;background:#f0eff1"></div>
<div class="a" style="left:485px;top:1349px;width:349px;height:23px;background:#cdcccf"></div>
<svg class="a" style="left:466px;top:1353px" width="12" height="16"><path d="M9 2 L3 8 L9 14" stroke="#333" stroke-width="2" fill="none"/></svg>
<svg class="a" style="left:845px;top:1353px" width="12" height="16"><path d="M3 2 L9 8 L3 14" stroke="#333" stroke-width="2" fill="none"/></svg>
<!-- right pane -->
<div class="a" style="left:867px;top:334px;width:1406px;height:1040px;background:#efeeef"></div>
<div class="a" style="left:871px;top:369px;width:1374px;height:32px;background:#fff;border:1px solid #7a7a7a"></div>
<svg class="a" style="left:2224px;top:380px" width="14" height="10"><path d="M1 2 L7 8 L13 2" stroke="#333" stroke-width="1.4" fill="none"/></svg>
<div class="a" style="left:2246px;top:369px;width:25px;height:32px;background:#f6f6f6;border:1px solid #d0d0d0"></div>
<svg class="a" style="left:2248px;top:375px" width="22" height="20"><path d="M2 10 H19 M12 3 L19 10 L12 17" stroke="#555" stroke-width="2.2" fill="none"/></svg>
<div class="a" style="left:871px;top:401px;width:1401px;height:961px;border-left:2px solid #6a6a6a;border-right:1px solid #888;background:repeating-linear-gradient(180deg,#fefaf0 0,#fefaf0 25px,#f6f8f6 25px,#f6f8f6 50px);background-position:0 30px"></div>
<div class="a" style="left:873px;top:401px;width:1398px;height:30px;background:#fefefe"></div>
<div class="a" style="left:1987px;top:401px;width:1px;height:30px;background:#e2e2e2"></div>
<div class="t" style="left:1995px;top:407px;font-size:18px;color:#111">创建时间</div>
<div class="a" style="left:873px;top:481px;width:1398px;height:25px;background:#e4ddcc"></div>
<div class="t" style="left:1994px;top:458px;font-size:18px;color:#111;letter-spacing:0.9px">2023-06-14 13:32:03</div>
<div class="t" style="left:1994px;top:484px;font-size:18px;color:#111;letter-spacing:0.9px">2023-06-14 13:32:04</div>
<div class="a" style="left:871px;top:1361px;width:1401px;height:15px;background:#f0eff1;border-top:2px solid #707070;border-bottom:1px solid #909090"></div>
<div class="a" style="left:1534px;top:1363px;width:76px;height:11px;background:#cdd5dd"></div>
<svg class="a" style="left:1561px;top:1363px" width="20" height="10"><path d="M2 9 L10 2 L18 9Z" fill="#111"/></svg>
<div class="a" style="left:455px;top:1376px;width:1818px;height:20px;background:#efeef0"></div>
<div class="t" style="left:456px;top:1380px;font-size:18px;color:#111">就绪</div>
<div class="a" style="left:1360px;top:1378px;width:1px;height:18px;background:#d0d0d0"></div>
<div class="a" style="left:1667px;top:1378px;width:1px;height:18px;background:#d0d0d0"></div>
<div class="a" style="left:2125px;top:1378px;width:1px;height:18px;background:#d0d0d0"></div>
<div class="a" style="left:2185px;top:1378px;width:1px;height:18px;background:#d0d0d0"></div>
<div class="a" style="left:2245px;top:1378px;width:1px;height:18px;background:#d0d0d0"></div>
<div class="t" style="left:2129px;top:1380px;font-size:18px;color:#111">大写</div>
<div class="t" style="left:2189px;top:1380px;font-size:18px;color:#111">数字</div>

<!-- settings dialog -->
<div class="a" style="left:785px;top:446px;width:1161px;height:555px;background:#efeef0;border:1px solid #a0a0a0;box-shadow:0 4px 18px rgba(0,0,0,.3)"></div>
<div class="a" style="left:786px;top:447px;width:1159px;height:35px;background:#fdfbfd"></div>
<svg class="a" style="left:789px;top:451px" width="22" height="24" viewBox="0 0 24 25"><path d="M3 4 Q3 1 6 1 L16 1 Q22 1 22 7 L22 19 Q22 24 16 24 L6 24 Q3 24 3 21Z" fill="#f07a10"/><path d="M8 7 H17 M8 7 V18 H17 V12 H12" stroke="#fff" stroke-width="2.6" fill="none"/></svg>
<div class="t" style="left:817px;top:454px;font-size:18px;color:#777">设置</div>
<svg class="a" style="left:1912px;top:456px" width="16" height="16"><path d="M1 1L15 15M15 1L1 15" stroke="#777" stroke-width="1.2"/></svg>
<div class="a" style="left:801px;top:504px;width:80px;height:290px;background:#fff;border:1px solid #828790"></div>
<div class="a" style="left:803px;top:507px;width:60px;height:21px;background:#0a6cd0"></div>
<div class="t" style="left:805px;top:508px;font-size:18px;color:#fff">Boot0</div>
<div class="t" style="left:805px;top:532px;font-size:18px;color:#111">Boot0</div>
<div class="a" style="left:802px;top:806px;width:80px;height:37px;background:#cfcfd1;border:1px solid #c0c0c0"></div>
<div class="t" style="left:815px;top:815px;font-size:18px;color:#8a8a8a">上移</div>
<div class="a" style="left:801px;top:872px;width:80px;height:68px;border:1px solid #d6d6d6"></div>
<div class="a" style="left:806px;top:856px;width:44px;height:20px;background:#efeef0"></div>
<div class="t" style="left:810px;top:856px;font-size:18px;color:#111">UEFI</div>
<div class="t" style="left:801px;top:959px;font-size:18px;color:#111">Unknown</div>
<!-- right side of settings visible -->
<div class="a" style="left:1860px;top:509px;width:66px;height:335px;border:1px solid #d4d4d4;border-left:none"></div>
<div class="a" style="left:1860px;top:522px;width:54px;height:33px;background:#f4f4f6;border:1px solid #c8c8c8"></div>
<div class="a" style="left:1860px;top:565px;width:54px;height:33px;background:#f4f4f6;border:1px solid #c8c8c8"></div>
<div class="a" style="left:1860px;top:610px;width:54px;height:33px;background:#cfcfd1;border:1px solid #bdbdbd"></div>
<svg class="a" style="left:1894px;top:621px" width="14" height="10"><path d="M1 2 L7 8 L13 2" stroke="#888" stroke-width="1.4" fill="none"/></svg>
<div class="a" style="left:1860px;top:653px;width:54px;height:33px;background:#cfcfd1;border:1px solid #bdbdbd"></div>
<svg class="a" style="left:1894px;top:664px" width="14" height="10"><path d="M1 2 L7 8 L13 2" stroke="#888" stroke-width="1.4" fill="none"/></svg>
<div class="a" style="left:1860px;top:697px;width:56px;height:31px;background:#cfcfd1;border:1px solid #bdbdbd"></div>
<div class="t" style="left:1889px;top:708px;font-size:14px;color:#555">...</div>
<div class="t" style="left:1878px;top:749px;font-size:18px;color:#111">文)</div>
<div class="a" style="left:1860px;top:801px;width:54px;height:31px;background:#cfcfd1;border:1px solid #bdbdbd"></div>
<div class="a" style="left:1860px;top:865px;width:68px;height:75px;border:1px solid #d8d8d8;border-left:none"></div>
<div class="a" style="left:1860px;top:887px;width:54px;height:31px;background:#cfcfd1;border:1px solid #bdbdbd"></div>
<div class="t" style="left:1876px;top:893px;font-size:18px;color:#8a8a8a">书</div>
<div class="a" style="left:1860px;top:951px;width:54px;height:31px;background:#cfcfd1;border:1px solid #bdbdbd"></div>



<!-- select boot file dialog -->
<div class="a" style="left:848px;top:184px;width:1034px;height:1070px;background:#efeef0;border:1px solid #8a8a8a;box-shadow:0 4px 18px rgba(0,0,0,.26)"></div>
<div class="a" style="left:849px;top:185px;width:1032px;height:44px;background:#fdfbfd"></div>
<svg class="a" style="left:859px;top:194px" width="24" height="25" viewBox="0 0 24 25"><path d="M3 4 Q3 1 6 1 L16 1 Q22 1 22 7 L22 19 Q22 24 16 24 L6 24 Q3 24 3 21Z" fill="#f07a10"/><path d="M8 7 H17 M8 7 V18 H17 V12 H12" stroke="#fff" stroke-width="2.6" fill="none"/></svg>
<div class="t" style="left:888px;top:198px;font-size:18px;color:#1a1a1a">选择启动文件</div>
<div class="a" style="left:1699px;top:206px;width:15px;height:1px;background:#c8c8c8"></div>
<div class="a" style="left:1768px;top:199px;width:15px;height:15px;border:1px solid #222"></div>
<svg class="a" style="left:1838px;top:198px" width="17" height="17"><path d="M1 1L16 16M16 1L1 16" stroke="#222" stroke-width="1.2"/></svg>
<!-- back btn -->
<svg class="a" style="left:862px;top:244px" width="54" height="55" viewBox="0 0 54 55"><defs><radialGradient id="bg1" cx=".4" cy=".35" r=".7"><stop offset="0" stop-color="#fff"/><stop offset="1" stop-color="#c8ccd4"/></radialGradient></defs><circle cx="27" cy="27.5" r="24.5" fill="url(#bg1)" stroke="#153a7a" stroke-width="2.5"/><path d="M9 26 L21 15 L24 18 L17 24 H44 V29 H17 L24 35 L21 38Z" fill="#1a3c8c" stroke="#102a60" stroke-width="1" stroke-linejoin="round"/></svg>
<div class="t" style="left:944px;top:255px;font-size:18px;color:#111">选择分区:</div>
<div class="a" style="left:1046px;top:246px;width:817px;height:33px;background:#e3e2e4;border:1px solid #b4b4b4"></div>
<svg class="a" style="left:1049px;top:256px" width="26" height="14"><path d="M0 6 L17 0 L25 3 L25 6 L8 12 L0 9Z" fill="#d8d8d8"/><path d="M0 6 L8 9 L25 3 L25 6 L8 12 L0 9Z" fill="#333"/></svg>
<div class="t" style="left:1077px;top:253px;font-size:18px;color:#111">HD2:EFI(0)</div>
<svg class="a" style="left:1842px;top:257px" width="14" height="10"><path d="M1 2 L7 8 L13 2" stroke="#333" stroke-width="1.4" fill="none"/></svg>
<div class="t" style="left:944px;top:301px;font-size:18px;color:#111">当前路径:</div>
<div class="a" style="left:1046px;top:292px;width:817px;height:34px;background:#efeef0;border:1px solid #a8a8a8;border-top-color:#7a7a7a"></div>
<div class="t" style="left:1050px;top:299px;font-size:18px;color:#111">\EFI\BOOT</div>
<div class="a" style="left:938px;top:287px;width:253px;height:45px;border:3px solid #d42030"></div>
<!-- list -->
<div class="a" style="left:864px;top:335px;width:999px;height:813px;border:1px solid #8c8c8c;background:repeating-linear-gradient(180deg,#fefaf0 0,#fefaf0 25px,#f6f8f6 25px,#f6f8f6 50px);background-position:0 30px"></div>
<div class="a" style="left:865px;top:336px;width:997px;height:30px;background:#fdfdfd"></div>
<div class="a" style="left:1074px;top:336px;width:1px;height:30px;background:#e2e2e2"></div>
<div class="a" style="left:1155px;top:336px;width:1px;height:30px;background:#e2e2e2"></div>
<div class="a" style="left:1281px;top:336px;width:1px;height:30px;background:#e2e2e2"></div>
<div class="a" style="left:1347px;top:336px;width:1px;height:30px;background:#e2e2e2"></div>
<div class="a" style="left:1473px;top:336px;width:1px;height:30px;background:#e2e2e2"></div>
<div class="a" style="left:1677px;top:336px;width:1px;height:30px;background:#e2e2e2"></div>
<svg class="a" style="left:872px;top:340px" width="22" height="22" viewBox="0 0 22 22"><path d="M11 1 L21 11 H15 V20 H7 V11 H1Z" fill="#9ad8f8" stroke="#0a1a3a" stroke-width="2" stroke-linejoin="round"/></svg>
<div class="lh t" style="left:907px">名称</div>
<div class="lh t" style="left:1114px">大小</div>
<div class="lh t" style="left:1162px">文件类型</div>
<div class="lh t" style="left:1288px">属性</div>
<div class="lh t" style="left:1354px">短文件名</div>
<div class="lh t" style="left:1480px">修改时间</div>
<div class="lh t" style="left:1684px">创建时间</div>
<div class="a" style="left:871px;top:367px;width:19px;height:22px;background:#f6e6a8;border-radius:1px"></div>
<div class="t" style="left:895px;top:370px;font-size:18px;color:#111">..</div>
<div class="a" style="left:894px;top:391px;width:968px;height:24px;background:#c6e1f9"></div>
<svg class="a" style="left:870px;top:392px" width="20" height="22"><path d="M1 1 H13 L18 6 V21 H1Z" fill="#4a90e0"/><path d="M13 1 L18 6 H13Z" fill="#cfe4fa"/></svg>
<div class="t" style="left:1358px;top:394px;width:0"></div>
<div class="lr t" style="left:895px">BOOTx64.efi</div>
<div class="lr t" style="left:1091px">24.0KB</div>
<div class="lr t" style="left:1162px">efi 文件</div>
<div class="lr t" style="left:1288px">A</div>
<div class="lr t" style="left:1354px">BOOTX64.EFI</div>
<div class="lr t" style="left:1480px;letter-spacing:0.8px">2023-05-08 23:53:28</div>
<div class="a" style="left:1680px;top:391px;width:182px;height:24px;overflow:hidden"><div class="t" style="left:4px;top:3px;font-size:18px;color:#111;letter-spacing:0.8px">2023-05-28 10:00:33</div></div>
<div class="a" style="left:866px;top:389px;width:209px;height:28px;border:3px solid #d42030"></div>
<!-- hscroll -->
<div class="a" style="left:865px;top:1121px;width:997px;height:26px;background:#f0f0f0"></div>
<div class="a" style="left:892px;top:1122px;width:927px;height:24px;background:#cdcdcd"></div>
<svg class="a" style="left:871px;top:1126px" width="12" height="16"><path d="M9 2 L3 8 L9 14" stroke="#333" stroke-width="2" fill="none"/></svg>
<svg class="a" style="left:1842px;top:1126px" width="12" height="16"><path d="M3 2 L9 8 L3 14" stroke="#333" stroke-width="2" fill="none"/></svg>
<!-- filename -->
<div class="t" style="left:906px;top:1165px;font-size:18px;color:#111">文件名:</div>
<div class="a" style="left:992px;top:1157px;width:565px;height:34px;background:#fff;border:1px solid #7a7a7a"></div>
<div class="t" style="left:997px;top:1163px;font-size:18px;color:#111">BOOTx64.efi</div>
<div class="a" style="left:1567px;top:1157px;width:296px;height:34px;background:#e5e4e6;border:1px solid #b0b0b0"></div>
<div class="t" style="left:1570px;top:1164px;font-size:18px;color:#111">启动文件(*.efi)</div>
<svg class="a" style="left:1842px;top:1168px" width="14" height="10"><path d="M1 2 L7 8 L13 2" stroke="#333" stroke-width="1.4" fill="none"/></svg>
<!-- buttons -->
<div class="a" style="left:1216px;top:1209px;width:112px;height:31px;background:#e4e4e6;border:2px solid #2a7ad2"></div>
<div class="t" style="left:1253px;top:1215px;font-size:18px;color:#111">打开</div>
<div class="a" style="left:1405px;top:1209px;width:112px;height:31px;background:#e1e0e2;border:1px solid #adadad"></div>
<div class="t" style="left:1442px;top:1215px;font-size:18px;color:#111">取消</div>


<!-- cursor -->
<div class="a" style="left:1284px;top:1202px;width:48px;height:48px;border-radius:50%;background:radial-gradient(circle,rgba(238,228,110,.7) 0,rgba(238,228,110,.6) 55%,rgba(238,228,110,0) 70%)"></div>
<svg class="a" style="left:1311px;top:1224px" width="26" height="42"><path d="M1 1 V32 L8 25 L14 39 L19 37 L13 23 L23 23Z" fill="#fff" stroke="#111" stroke-width="1.6" stroke-linejoin="round"/></svg>
<!-- taskbar -->
<div class="a" style="left:0;top:1394px;width:2560px;height:46px;background:linear-gradient(90deg,#cfe2f2,#cbdcef 60%,#c9d9ee)"></div>
<div class="a" style="left:1082px;top:1394px;width:55px;height:46px;background:#e3edf8"></div>
<div class="a" style="left:176px;top:1436px;width:43px;height:4px;background:#1a64c8"></div>
<div class="a" style="left:1031px;top:1436px;width:43px;height:4px;background:#1a64c8"></div>
<div class="a" style="left:1082px;top:1436px;width:55px;height:4px;background:#1a64c8"></div>
<svg class="a" style="left:14px;top:1405px" width="26" height="25"><path d="M0 3.5 L10.5 2 V11.5 H0Z M12 1.8 L25 0 V11.5 H12Z M0 13 H10.5 V23 L0 21.5Z M12 13 H25 V25 L12 23.2Z" fill="#000"/></svg>
<svg class="a" style="left:68px;top:1405px" width="26" height="24"><path d="M1 2 H16 M1 22 H16 M4 7 H14 V17 H4Z" stroke="#000" stroke-width="1.6" fill="none"/><path d="M23 1 V23" stroke="#000" stroke-width="1.6"/><rect x="21" y="9" width="4" height="4" fill="#000"/></svg>
<svg class="a" style="left:129px;top:1404px" width="22" height="26"><ellipse cx="11" cy="9" rx="7.5" ry="8.5" fill="#111"/><ellipse cx="11" cy="18" rx="9" ry="7.5" fill="#111"/><ellipse cx="11" cy="18" rx="6" ry="6" fill="#fff"/><path d="M4 13 Q11 17 18 13 L17 16 Q11 19 5 16Z" fill="#e02010"/><ellipse cx="8.5" cy="8" rx="1.8" ry="2.3" fill="#fff"/><ellipse cx="13.5" cy="8" rx="1.8" ry="2.3" fill="#fff"/><path d="M8 11 Q11 13 14 11 L11 14Z" fill="#f0b010"/><path d="M3 24 Q6 21 9 25Z M13 25 Q16 21 19 24Z" fill="#f0a010"/></svg>
<svg class="a" style="left:185px;top:1407px" width="24" height="22"><path d="M1 2 H9 L11 4 H23 V21 H1Z" fill="#f0c030"/><path d="M1 7 H23 V21 H1Z" fill="#fad868"/><path d="M7 13 H17 V21 H14 V17 H10 V21 H7Z" fill="#1a68c8"/></svg>
<div class="a" style="left:242px;top:1405px;width:24px;height:24px;background:#fff;border-radius:5px"></div>
<svg class="a" style="left:245px;top:1408px" width="18" height="18"><path d="M3 2 L16 9 L3 16Z" fill="none" stroke="#20b0f0" stroke-width="3" stroke-linejoin="round"/><path d="M3 2 L16 9 L3 16" fill="none" stroke="#ff9020" stroke-width="3" stroke-dasharray="10 30" stroke-linejoin="round"/><path d="M7 7 L11 9 L7 11Z" fill="#40c040"/></svg>
<svg class="a" style="left:298px;top:1404px" width="26" height="24"><ellipse cx="9" cy="9" rx="8.5" ry="7.5" fill="#2ac050"/><ellipse cx="18" cy="16" rx="7.5" ry="6.5" fill="#e8e8e8"/><circle cx="6" cy="8" r="1.2" fill="#fff"/><circle cx="12" cy="8" r="1.2" fill="#fff"/></svg>
<svg class="a" style="left:356px;top:1405px" width="25" height="25"><circle cx="12.5" cy="12.5" r="12" fill="#1a7ad8"/><path d="M2 12 Q4 2 13 1 Q23 1 24 11 Q24 16 19 17 Q13 17 12 13 Q15 9 19 11 Q17 6 11 7 Q5 9 6 16 Q8 22 15 24 Q5 24 2 16Z" fill="#40c8a0"/><path d="M6 16 Q8 22 15 24 Q22 23 24 17 Q20 22 14 20 Q9 18 10 13Z" fill="#0a58b0"/></svg>
<svg class="a" style="left:412px;top:1405px" width="25" height="25"><circle cx="12.5" cy="12.5" r="12" fill="#e03a30"/><path d="M12.5 12.5 L23.5 7 A12 12 0 0 1 12 24.5Z" fill="#f8c820"/><path d="M12.5 12.5 L12 24.5 A12 12 0 0 1 1.5 7Z" fill="#20a040"/><circle cx="12.5" cy="12.5" r="5.5" fill="#fff"/><circle cx="12.5" cy="12.5" r="4" fill="#2a78e0"/></svg>
<div class="a" style="left:469px;top:1405px;width:25px;height:24px;background:#d81818;border-radius:5px"></div>
<svg class="a" style="left:472px;top:1408px" width="19" height="18"><circle cx="9.5" cy="10" r="6" fill="none" stroke="#fff" stroke-width="2.4"/><circle cx="9.5" cy="10" r="2" fill="#fff"/><path d="M10 2 Q5 3 4 6" stroke="#fff" stroke-width="2.4" fill="none"/></svg>
<div class="a" style="left:526px;top:1405px;width:24px;height:24px;background:#f4f4f8;border-radius:5px"></div>
<svg class="a" style="left:530px;top:1408px" width="17" height="18"><path d="M3 2 L15 9 L8 13Z" fill="#f0305a"/><path d="M8 13 L15 9 L5 16 Q2 14 4 11Z" fill="#2a8ae8"/></svg>
<div class="a" style="left:584px;top:1405px;width:24px;height:24px;border-radius:4px;background:linear-gradient(135deg,#10b060,#1a8a9a 50%,#8a40e0)"></div>
<div class="t" style="left:585px;top:1411px;font-size:9px;font-weight:bold;color:#fff">iQIYI</div>
<div class="a" style="left:640px;top:1405px;width:24px;height:24px;background:#f06810;border-radius:50%"></div>
<div class="t" style="left:644px;top:1410px;font-size:14px;font-weight:bold;color:#fff">M</div>
<svg class="a" style="left:698px;top:1406px" width="22" height="22"><rect x="1" y="1" width="20" height="20" rx="3" fill="#f8d898" stroke="#2a6ab0" stroke-width="2"/><rect x="3" y="3" width="8" height="8" fill="#7ac0f0"/><path d="M4 13 H10 M4 16 H10" stroke="#2a6ab0" stroke-width="1.5"/><rect x="13" y="13" width="6" height="6" fill="#a8d870"/></svg>
<div class="a" style="left:755px;top:1405px;width:24px;height:24px;background:#fff;border-radius:4px"></div>
<svg class="a" style="left:757px;top:1408px" width="20" height="18"><circle cx="6" cy="11" r="4.5" fill="none" stroke="#3a8ae0" stroke-width="2"/><circle cx="14" cy="11" r="4.5" fill="none" stroke="#2a6ad0" stroke-width="2"/><circle cx="10" cy="5" r="4.5" fill="none" stroke="#e03a40" stroke-width="2"/></svg>
<div class="a" style="left:812px;top:1405px;width:23px;height:24px;background:#fdfdfd"></div>
<svg class="a" style="left:814px;top:1410px" width="20" height="14"><path d="M4 12 Q0 12 1 8 Q2 5 6 6 Q7 1 12 2 Q17 3 17 7 Q20 8 19 11 Q18 13 14 12" fill="none" stroke="#2a7ad8" stroke-width="1.8"/><path d="M9 9 Q12 13 14 9" stroke="#e02020" stroke-width="1.8" fill="none"/></svg>
<div class="a" style="left:869px;top:1405px;width:24px;height:24px;background:#fdfdfd"></div>
<svg class="a" style="left:871px;top:1409px" width="20" height="16"><path d="M4 14 Q0 13 1 9 Q2 6 6 7 Q7 1 12 2 Q17 3 17 8 Q20 9 19 12 Q18 14 15 14" fill="none" stroke="#2a6ac8" stroke-width="1.8"/><circle cx="10" cy="10" r="3" fill="none" stroke="#2a6ac8" stroke-width="1.6"/></svg>
<div class="a" style="left:925px;top:1405px;width:24px;height:24px;background:#2a7ad0;border-radius:4px"></div>
<div class="t" style="left:926px;top:1411px;font-size:11px;font-weight:bold;color:#fff">TLY</div>
<div class="a" style="left:983px;top:1405px;width:24px;height:24px;background:#2a88e8;border-radius:4px"></div>
<svg class="a" style="left:986px;top:1408px" width="18" height="18"><path d="M2 3 Q8 9 9 15 L11 11 L16 13 Q12 8 16 2 Q10 6 9 8Z" fill="#fff"/></svg>
<div class="a" style="left:1039px;top:1405px;width:24px;height:24px;border-radius:50%;background:#111;border:2px solid #ddd"></div>
<div class="a" style="left:1045px;top:1411px;width:12px;height:12px;border-radius:50%;background:#e81818"></div>
<svg class="a" style="left:1097px;top:1405px" width="24" height="25" viewBox="0 0 24 25"><path d="M3 4 Q3 1 6 1 L16 1 Q22 1 22 7 L22 19 Q22 24 16 24 L6 24 Q3 24 3 21Z" fill="#f07a10"/><path d="M8 7 H17 M8 7 V18 H17 V12 H12" stroke="#fff" stroke-width="2.6" fill="none"/></svg>
<!-- tray -->
<svg class="a" style="left:2277px;top:1409px" width="20" height="12"><path d="M2 10 L10 2 L18 10" stroke="#111" stroke-width="1.4" fill="none"/></svg>
<svg class="a" style="left:2311px;top:1406px" width="24" height="20"><path d="M2 7 H6 L12 2 V18 L6 13 H2Z" fill="none" stroke="#111" stroke-width="1.4"/><path d="M15 7 L21 13 M21 7 L15 13" stroke="#111" stroke-width="1.4"/></svg>
<svg class="a" style="left:2349px;top:1406px" width="22" height="20"><path d="M2 18 Q2 4 18 2 M6 18 Q6 8 18 6 M10 18 Q10 11 18 10" stroke="#111" stroke-width="1.4" fill="none"/><circle cx="17" cy="17" r="2" fill="#111"/></svg>
<div class="t" style="left:2382px;top:1406px;font-size:22px;color:#111">中</div>
<div class="t" style="left:2421px;top:1407px;font-size:19px;color:#111">13:32</div>
<svg class="a" style="left:2497px;top:1405px" width="26" height="26"><path d="M1 1 H25 V19 H16 L13 24 L10 19 H1Z" fill="#111"/><path d="M6 6 H20 M6 10 H20 M6 14 H15" stroke="#fff" stroke-width="1.4"/></svg>
<div class="a" style="left:2553px;top:1394px;width:1px;height:46px;background:#888"></div>


</body></html>
